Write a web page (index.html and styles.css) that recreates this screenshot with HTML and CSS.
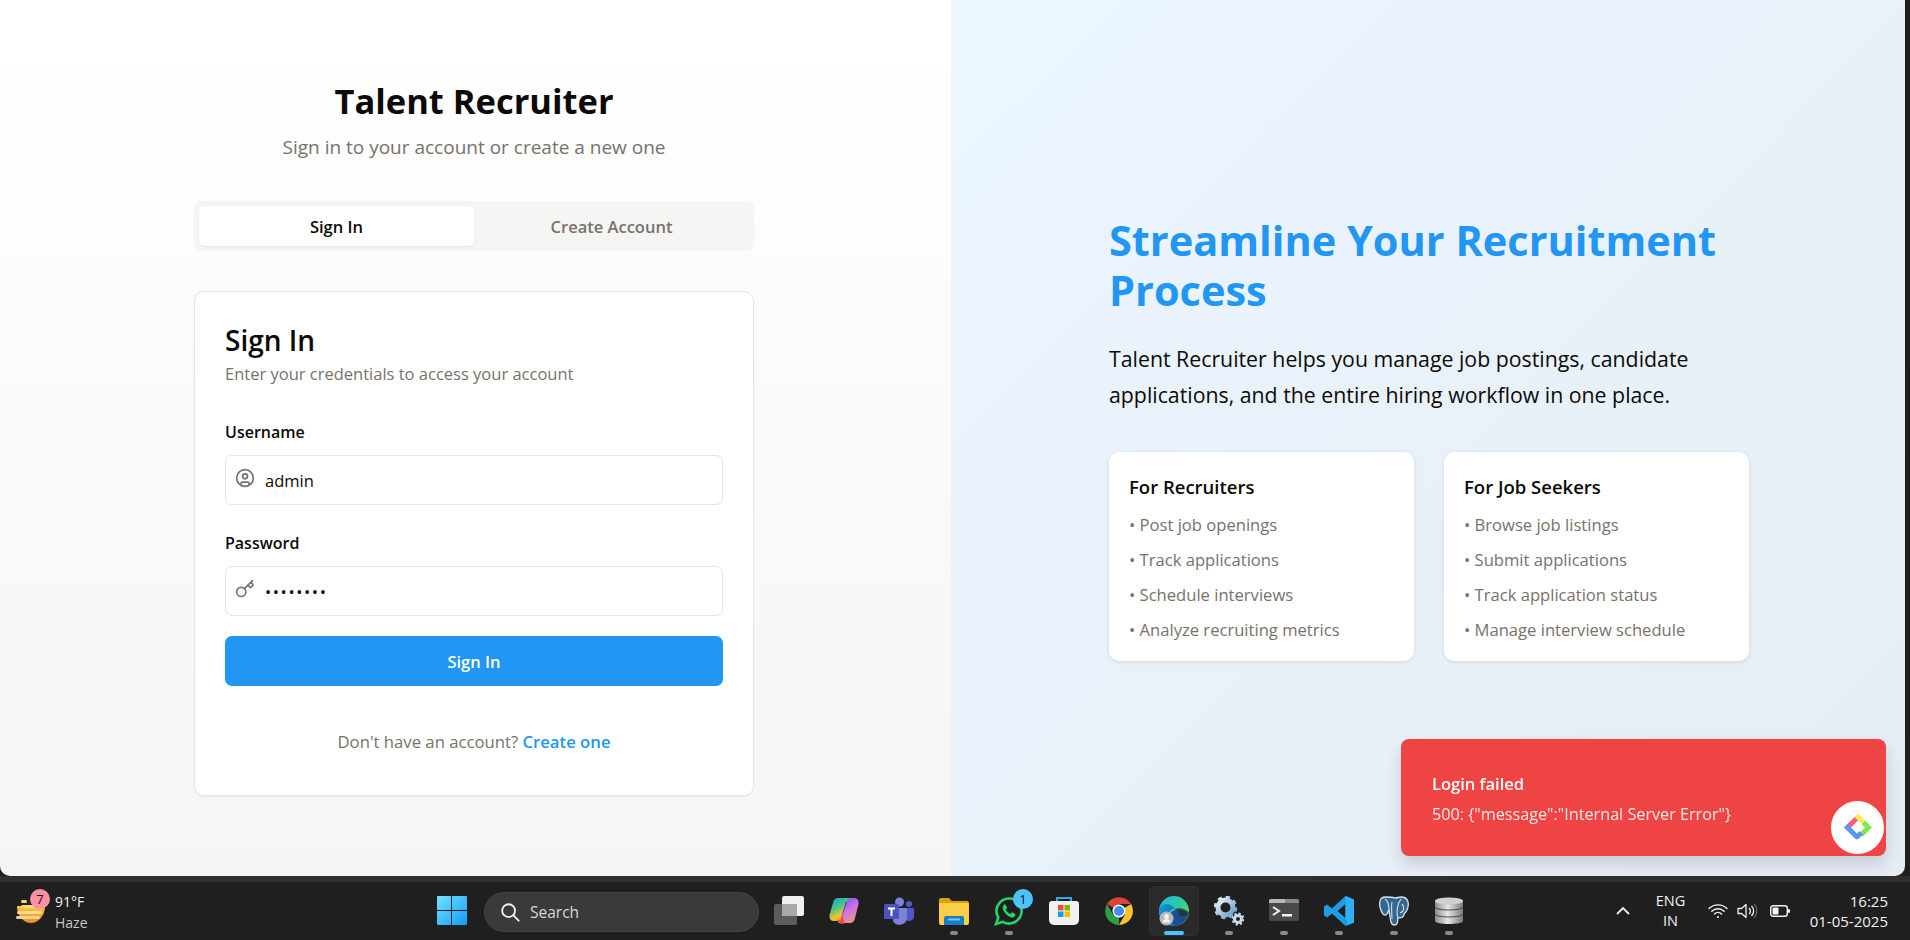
FILE: index.html
```html
<!DOCTYPE html>
<html lang="en">
<head>
    <meta charset="UTF-8">
    <meta name="viewport" content="width=device-width, initial-scale=1.0">
    <title>Talent Recruiter</title>
    <link rel="stylesheet" href="styles.css">
</head>
<body>

    <div class="window">
        <section class="auth-panel">
            <h1 class="brand">Talent Recruiter</h1>
            <p class="tagline">Sign in to your account or create a new one</p>

            <div class="tabs">
                <button class="tab active">Sign In</button>
                <button class="tab">Create Account</button>
            </div>

            <form class="card">
                <h2 class="card-title">Sign In</h2>
                <p class="card-desc">Enter your credentials to access your account</p>

                <label class="field-label">Username</label>
                <div class="field">
                    <svg class="field-icon" viewBox="0 0 24 24"><circle cx="12" cy="12" r="10"/><circle cx="12" cy="10" r="3"/><path d="M7 20.662V19a2 2 0 0 1 2-2h6a2 2 0 0 1 2 2v1.662"/></svg>
                    <input type="text" value="admin">
                </div>

                <label class="field-label second">Password</label>
                <div class="field">
                    <svg class="field-icon" viewBox="0 0 24 24"><path d="m15.5 7.5 2.3 2.3a1 1 0 0 0 1.4 0l2.1-2.1a1 1 0 0 0 0-1.4L19 4"/><path d="m21 2-9.6 9.6"/><circle cx="7.5" cy="15.5" r="5.5"/></svg>
                    <input class="secret" type="password" value="admin123">
                </div>

                <button type="button" class="submit">Sign In</button>

                <p class="switch">Don't have an account? <a href="#">Create one</a></p>
            </form>
        </section>

        <section class="hero">
            <h2 class="hero-title">Streamline Your Recruitment Process</h2>
            <p class="hero-text">Talent Recruiter helps you manage job postings, candidate applications, and the entire hiring workflow in one place.</p>
            <div class="hero-cards">
                <div class="hero-card">
                    <h3>For Recruiters</h3>
                    <ul>
                        <li>• Post job openings</li>
                        <li>• Track applications</li>
                        <li>• Schedule interviews</li>
                        <li>• Analyze recruiting metrics</li>
                    </ul>
                </div>
                <div class="hero-card">
                    <h3>For Job Seekers</h3>
                    <ul>
                        <li>• Browse job listings</li>
                        <li>• Submit applications</li>
                        <li>• Track application status</li>
                        <li>• Manage interview schedule</li>
                    </ul>
                </div>
            </div>
        </section>
    </div>

    <div class="toast">
        <div class="toast-title">Login failed</div>
        <div class="toast-msg">500: {"message":"Internal Server Error"}</div>
    </div>

    <div class="chat-bubble">
        <svg viewBox="0 0 32 32" width="32" height="32">
            <path d="M16 1.5 L23 8.5 L19.5 12 L12.5 5 Z" fill="#ffe85c"/>
            <path d="M23 8.5 L30 15.5 L21 24.5 L17.5 21 L23 15.5 L19.5 12 Z" fill="#7fe84f"/>
            <path d="M12.5 5 L2 15.5 L5.5 19 L16 8.5 Z" fill="#ff5c7c"/>
            <path d="M2 15.5 L12.5 26 Q15 28.5 17.5 26 L21 22.5 L17.5 19 L15 21.5 L5.5 12 Z" fill="#5b96f7"/>
        </svg>
    </div>

    <div class="taskbar-edge"></div>
    <footer class="taskbar">
        <div class="weather">
            <div class="weather-icon">
                <svg viewBox="0 0 30 33" width="30" height="33">
                    <defs><linearGradient id="sun" x1="0" y1="0" x2="0" y2="1"><stop offset="0" stop-color="#f7c648"/><stop offset="1" stop-color="#f08a12"/></linearGradient></defs>
                    <path d="M1 16 H29 A14 17 0 0 1 1 16 Z" fill="url(#sun)"/>
                    <path d="M18 12 H29 V16 H18 Z" fill="#f5bb38"/>
                    <rect x="5" y="10" width="6" height="3" rx="1.5" fill="#f8d778"/>
                    <rect x="5" y="15" width="13" height="3" rx="1.5" fill="#f8d778"/>
                    <rect x="1" y="21" width="25" height="3" rx="1.5" fill="#f8dc90"/>
                    <rect x="0" y="26" width="24" height="3" rx="1.5" fill="#ecd5a0"/>
                </svg>
                <span class="weather-badge">7</span>
            </div>
            <div class="weather-text">
                <div class="temp">91°F</div>
                <div class="cond">Haze</div>
            </div>
        </div>

        <div class="task">
            <svg class="task-icon" viewBox="0 0 30 30">
                <defs><linearGradient id="win" x1="0" y1="0" x2="1" y2="1"><stop offset="0" stop-color="#74e3ff"/><stop offset="1" stop-color="#0f9cf5"/></linearGradient></defs>
                <path d="M0 1 a1 1 0 0 1 1-1 H14 V14 H0 Z M15 0 H29 a1 1 0 0 1 1 1 V14 H15 Z M0 15 H14 V29 H1 a1 1 0 0 1-1-1 Z M15 15 H30 V28 a1 1 0 0 1-1 1 H15 Z" fill="url(#win)"/>
            </svg>
        </div>

        <div class="search">
            <svg viewBox="0 0 24 24" width="22" height="22" fill="none" stroke="#f2f2f2" stroke-width="2" stroke-linecap="round"><circle cx="10.5" cy="10.5" r="7"/><path d="m16 16 5.5 5.5"/></svg>
            <span>Search</span>
        </div>

        <div class="task">
            <svg class="task-icon" viewBox="0 0 30 30">
                <rect x="0" y="8" width="23" height="21" rx="2" fill="#5c5c5c"/>
                <rect x="8" y="0" width="22" height="20" rx="2" fill="#f0f0f0"/>
                <rect x="8" y="8" width="15" height="12" fill="#a8a8a8"/>
            </svg>
        </div>
        <div class="task">
            <svg class="task-icon" viewBox="0 0 30 30">
                <defs>
                    <linearGradient id="cp1" x1="0" y1="0" x2="0.5" y2="1"><stop offset="0" stop-color="#1c9de8"/><stop offset=".45" stop-color="#3fc78a"/><stop offset=".8" stop-color="#f4c52a"/><stop offset="1" stop-color="#f08a3c"/></linearGradient>
                    <linearGradient id="cp2" x1="0.2" y1="0" x2="0.8" y2="1"><stop offset="0" stop-color="#6a5cf0"/><stop offset=".5" stop-color="#d070e8"/><stop offset="1" stop-color="#f79a6c"/></linearGradient>
                </defs>
                <path d="M21 27 H9 L17 5 Q18 2 21 2 H25 Q30 2 29.500 8 L26 22 Q25 27 21 27 Z" fill="url(#cp2)"/>
                <path d="M9 2 H22 Q18 3 16 9 L12 22 Q11 25 8 25 H5 Q0 25 .500 19 L4 7 Q5 2 9 2 Z" fill="url(#cp1)"/>
                <path d="M17 6 L12 22 L13 20 L18 6 Z" fill="#4a2a70"/>
                <path d="M10 24 Q12 24 13 20 L16 27 Q13 29 11 27 Z" fill="#ee4f3a"/>
            </svg>
        </div>
        <div class="task">
            <svg class="task-icon" viewBox="0 0 30 30">
                <circle cx="15.500" cy="6" r="4.500" fill="#7b83d8"/>
                <circle cx="25" cy="8" r="3" fill="#5059c9"/>
                <path d="M20 12 H29 a1 1 0 0 1 1 1 V20 a5 5 0 0 1-9 3 Z" fill="#5059c9"/>
                <path d="M9 12 H22 a1 1 0 0 1 1 1 V22 a7.500 7.500 0 0 1-14 3 Z" fill="#7b83d8"/>
                <rect x="0" y="8" width="15" height="15" rx="1.500" fill="#4b53bc"/>
                <path d="M4 11.500 H11 V13.500 H8.500 V20 H6.500 V13.500 H4 Z" fill="#fff"/>
            </svg>
        </div>
        <div class="task running">
            <svg class="task-icon" viewBox="0 0 30 30">
                <path d="M0 4 a2 2 0 0 1 2-2 H10 L13 5 H28 a2 2 0 0 1 2 2 V12 H0 Z" fill="#d9a10c"/>
                <path d="M0 7 H28 a2 2 0 0 1 2 2 V27 a2 2 0 0 1-2 2 H2 a2 2 0 0 1-2-2 Z" fill="#fbcf45"/>
                <path d="M5 29 V22 a2 2 0 0 1 2-2 H23 a2 2 0 0 1 2 2 V29 Z" fill="#1a7fc9"/>
                <rect x="9" y="22.500" width="12" height="2" rx="1" fill="#7cc7ef"/>
            </svg>
            <span class="pip"></span>
        </div>
        <div class="task running">
            <svg class="task-icon" viewBox="0 0 30 30">
                <path d="M15 2.500 a12.500 12.500 0 1 1-6.200 23.300 L2 28 l2.300-6.600 A12.500 12.500 0 0 1 15 2.500 Z" fill="none" stroke="#25d366" stroke-width="2.600"/>
                <path d="M10.500 8.500 c-1.200.5-2 2-1.800 3.600.4 3.800 5 8.800 9 9.300 1.700.2 3.200-.8 3.600-2l.1-1.400-3.300-1.700-1.600 1.800c-2-.7-3.900-2.600-4.700-4.600l1.400-1.500-1.500-3.400Z" fill="#25d366"/>
            </svg>
            <span class="task-badge">1</span>
            <span class="pip"></span>
        </div>
        <div class="task">
            <svg class="task-icon" viewBox="0 0 30 30">
                <path d="M8 7 V2 H22 V7" fill="none" stroke="#2ea8e6" stroke-width="2"/>
                <path d="M0 8 a3 3 0 0 1 3-3 H27 a3 3 0 0 1 3 3 V24 a5 5 0 0 1-5 5 H5 a5 5 0 0 1-5-5 Z" fill="#f1f1f1"/>
                <rect x="9" y="9" width="5.500" height="5.500" fill="#f25022"/>
                <rect x="15.500" y="9" width="5.500" height="5.500" fill="#7fba00"/>
                <rect x="9" y="15.500" width="5.500" height="5.500" fill="#00a4ef"/>
                <rect x="15.500" y="15.500" width="5.500" height="5.500" fill="#ffb900"/>
            </svg>
        </div>
        <div class="task">
            <svg class="task-icon" viewBox="0 0 30 30">
                <path d="M15 15 L3 8 A14 14 0 0 1 27.100 8 H15 Z" fill="#db4437"/>
                <path d="M15 15 L27.100 8 A14 14 0 0 1 15 29 L21 18.500 Z" fill="#fbc02d"/>
                <path d="M15 15 L15 29 A14 14 0 0 1 3 8 L9 18.500 Z" fill="#2e9f48"/>
                <circle cx="15" cy="15" r="6.500" fill="#fff"/>
                <circle cx="15" cy="15" r="5" fill="#3f8ef0"/>
            </svg>
        </div>
        <div class="task running active-task">
            <svg class="task-icon" viewBox="0 0 30 30">
                <defs>
                    <linearGradient id="edgeA" x1="0" y1="0" x2="1" y2="0.800"><stop offset="0" stop-color="#1fb6e8"/><stop offset=".6" stop-color="#2fcf9a"/><stop offset="1" stop-color="#5fd84f"/></linearGradient>
                    <linearGradient id="edgeB" x1="0" y1="0" x2="1" y2="1"><stop offset="0" stop-color="#1a9ae0"/><stop offset="1" stop-color="#0c59a4"/></linearGradient>
                </defs>
                <circle cx="15" cy="15" r="15" fill="url(#edgeA)"/>
                <path d="M14 15 C20 12 27 15 29.500 18 C28 24 22 30 15 30 C9 29 8 18 14 15 Z" fill="#184f96"/>
                <path d="M15 13 C20 11 28 13 30 17 C27 21 23 21 20 20 C21 17 19 14 15 13 Z" fill="#2a2a2a" opacity=".75"/>
                <path d="M.500 12 C4 6 13 7 15.500 13 C9 13 8 21 12 26 C14 28.500 17 29.500 20 29 C18 30 16 30 15 30 C6 30 -1 21 .500 12 Z" fill="url(#edgeB)"/>
                <circle cx="7.500" cy="22.500" r="7" fill="#b8b8b8"/>
                <circle cx="7.500" cy="20.500" r="2.500" fill="#f2f2f2"/>
                <path d="M3.500 26.500 a4 3.500 0 0 1 8 0 Z" fill="#f2f2f2"/>
            </svg>
            <span class="pip"></span>
        </div>
        <div class="task running">
            <svg class="task-icon" viewBox="0 0 30 30">
                <defs><linearGradient id="gear" x1="0" y1="0" x2="1" y2="1"><stop offset="0" stop-color="#e8f2fb"/><stop offset="1" stop-color="#6d9cc8"/></linearGradient></defs>
                <circle cx="11.500" cy="11.500" r="7.500" fill="none" stroke="url(#gear)" stroke-width="5"/>
                <circle cx="11.500" cy="11.500" r="10" fill="none" stroke="url(#gear)" stroke-width="3.500" stroke-dasharray="4 3.850"/>
                <circle cx="24" cy="23" r="3.500" fill="none" stroke="#c9dbea" stroke-width="3"/>
                <circle cx="24" cy="23" r="5.500" fill="none" stroke="#c9dbea" stroke-width="2" stroke-dasharray="2.200 2.100"/>
            </svg>
            <span class="pip"></span>
        </div>
        <div class="task running">
            <svg class="task-icon" viewBox="0 0 30 30">
                <rect x="0" y="3" width="30" height="22" rx="2" fill="#4a4a4a"/>
                <path d="M0 5 a2 2 0 0 1 2-2 H16 V7 H0 Z" fill="#b8b8b8"/>
                <path d="M16 3 H28 a2 2 0 0 1 2 2 V7 H16 Z" fill="#8a8a8a"/>
                <path d="M4 11 L10 15 L4 19" fill="none" stroke="#f2f2f2" stroke-width="2"/>
                <rect x="13" y="18" width="10" height="2.500" fill="#f2f2f2"/>
            </svg>
            <span class="pip"></span>
        </div>
        <div class="task running">
            <svg class="task-icon" viewBox="0 0 30 30">
                <path d="M21.500 0 L30 3.500 V26.500 L21.500 30 L8 17.500 L3 21.500 L0 19.500 V10.500 L3 8.500 L8 12.500 Z M21.500 8 L13.500 15 L21.500 22 Z" fill="#1e9de6" fill-rule="evenodd"/>
                <path d="M21.500 0 L30 3.500 V26.500 L21.500 30 Z" fill="#2fb0f5"/>
                <path d="M21.500 8 L21.500 22 L23 30 L21.500 30 Z" fill="#1277bb"/>
            </svg>
            <span class="pip"></span>
        </div>
        <div class="task running">
            <svg class="task-icon" viewBox="0 0 30 30">
                <path d="M6 1 C1 1 0 6 1 11 C2 15 4 20 7 19 C9 18 9 15 10 14 C11 19 11 23 12 26 C13 30 18 30 18.500 26 L19 22 C23 22 25 21 25 18 C28 16 30 10 29 6 C28 2 25 1 22 1 C20 1 18 2 16 2 C13 1 9 1 6 1 Z" fill="#336791" stroke="#d7e3ee" stroke-width="1.300"/>
                <path d="M10 14 C10 9 9 5 6 3 M19 22 C17 17 18 8 22 3 M23 8 C26 11 25 16 21 17 M13 6 C12 11 13 17 13 23" fill="none" stroke="#d7e3ee" stroke-width="1.100"/>
            </svg>
            <span class="pip"></span>
        </div>
        <div class="task running">
            <svg class="task-icon" viewBox="0 0 30 30">
                <defs><linearGradient id="dbg" x1="0" y1="0" x2="1" y2="0"><stop offset="0" stop-color="#8c8c8c"/><stop offset=".45" stop-color="#e6e6e6"/><stop offset="1" stop-color="#7c7c7c"/></linearGradient></defs>
                <path d="M1 5 C1 1 29 1 29 5 V25 C29 29 1 29 1 25 Z" fill="url(#dbg)"/>
                <ellipse cx="15" cy="5" rx="14" ry="3.500" fill="#d0d0d0"/>
                <path d="M1 11 C3 15 27 15 29 11 M1 18 C3 22 27 22 29 18" fill="none" stroke="#4d4d4d" stroke-width="1.200"/>
            </svg>
            <span class="pip"></span>
        </div>

        <div class="tray">
            <svg class="chevron" viewBox="0 0 16 10" width="16" height="10" fill="none" stroke="#f2f2f2" stroke-width="1.800"><path d="m2 8 6-6 6 6"/></svg>
            <div class="lang">ENG<br>IN</div>
            <svg class="tray-wifi" viewBox="0 0 20 16" width="20" height="16" fill="none" stroke="#f2f2f2" stroke-width="1.400" stroke-linecap="round"><path d="M1 5.500a13 13 0 0 1 18 0M3.800 8.300a9 9 0 0 1 12.400 0M6.500 11a5 5 0 0 1 7 0"/><circle cx="10" cy="14" r="1" fill="#f2f2f2" stroke="none"/></svg>
            <svg class="tray-sound" viewBox="0 0 22 16" width="22" height="16" fill="none" stroke="#f2f2f2" stroke-width="1.300"><path d="M1 5.500h3.500L9 1.500v13l-4.500-4H1Z" stroke-linejoin="round"/><path d="M12 5a4 4 0 0 1 0 6M14.500 3a7 7 0 0 1 0 10"/><path d="M17 1a10 10 0 0 1 0 14" stroke="#666"/></svg>
            <svg class="tray-battery" viewBox="0 0 20 12" width="20" height="12"><rect x=".700" y=".700" width="16.600" height="10.600" rx="2.500" fill="none" stroke="#f2f2f2" stroke-width="1.400"/><rect x="2.500" y="2.500" width="6" height="7" rx="1" fill="#f2f2f2"/><rect x="18" y="4" width="2" height="4" rx="1" fill="#f2f2f2"/></svg>
            <div class="clock">16:25<br>01-05-2025</div>
        </div>
    </footer>

</body>
</html>
```

FILE: styles.css
```css
* {
    box-sizing: border-box;
}
html, body {
    height: 100%;
}
body {
    margin: 0;
    display: flex;
    flex-direction: column;
    height: 940px;
    overflow: hidden;
    background-color: #1f1f1f;
    font-family: "Open Sans", "Noto Sans", sans-serif;
    color: #0c0a09;
}

.window {
    display: flex;
    width: 1905px;
    height: 876px;
    flex-shrink: 0;
    overflow: hidden;
    border-radius: 0 0 10px 10px;
}

/* left panel */
.auth-panel {
    width: 951px;
    padding-top: 78px;
    padding-right: 3px;
    display: flex;
    flex-direction: column;
    align-items: center;
    background: linear-gradient(to bottom, #ffffff, #f5f5f4);
}
.brand {
    margin: 0;
    font-size: 34.5px;
    line-height: 45px;
    font-weight: 700;
}
.tagline {
    margin: 10px 0 0;
    font-size: 19px;
    line-height: 28px;
    color: #78716c;
}
.tabs {
    width: 560px;
    height: 50px;
    margin-top: 40px;
    padding: 5px;
    display: flex;
    background-color: #f5f5f4;
    border-radius: 7px;
}
.tab {
    flex: 1;
    border: none;
    background: none;
    border-radius: 5px;
    font-family: inherit;
    font-size: 16.5px;
    font-weight: 600;
    color: #78716c;
}
.tab.active {
    background-color: #fff;
    color: #0c0a09;
    box-shadow: 0 1px 2px rgba(0, 0, 0, 0.08);
}
.card {
    width: 560px;
    height: 505px;
    margin-top: 40px;
    padding: 29px 30px 0;
    background-color: #fff;
    border: 1px solid #e7e5e4;
    border-radius: 10px;
    box-shadow: 0 1px 2px rgba(0, 0, 0, 0.05);
}
.card-title {
    margin: 0;
    font-size: 28px;
    line-height: 38px;
    font-weight: 600;
}
.card-desc {
    margin: 3px 0 0;
    font-size: 16.5px;
    line-height: 24px;
    color: #78716c;
}
.field-label {
    display: block;
    margin-top: 34px;
    font-size: 16px;
    line-height: 24px;
    font-weight: 600;
}
.field-label.second {
    margin-top: 26px;
}
.field {
    height: 50px;
    margin-top: 11px;
    padding-left: 9px;
    display: flex;
    align-items: center;
    background-color: #fff;
    border: 1px solid #e7e5e4;
    border-radius: 7px;
}
.field-icon {
    width: 20px;
    height: 20px;
    margin-top: -5px;
    flex-shrink: 0;
    fill: none;
    stroke: #78716c;
    stroke-width: 2;
    stroke-linecap: round;
    stroke-linejoin: round;
}
.field input {
    flex: 1;
    min-width: 0;
    margin-left: 10px;
    padding-left: 0;
    border: none;
    outline: none;
    background: none;
    font-family: inherit;
    font-size: 16.5px;
    color: #0c0a09;
}
.field input.secret {
    letter-spacing: 1.6px;
}
.submit {
    display: block;
    width: 100%;
    height: 50px;
    margin-top: 20px;
    border: none;
    border-radius: 7px;
    background-color: #2196f3;
    color: #fff;
    font-family: inherit;
    font-size: 16.5px;
    font-weight: 600;
}
.switch {
    margin: 44px 0 0;
    text-align: center;
    font-size: 16.7px;
    line-height: 24px;
    color: #78716c;
}
.switch a {
    color: #2196f3;
    font-weight: 600;
    text-decoration: none;
}

/* right panel */
.hero {
    flex: 1;
    padding-left: 158px;
    padding-right: 150px;
    display: flex;
    flex-direction: column;
    justify-content: center;
    background: linear-gradient(135deg, #ecf6fe, #e5ecf4);
}
.hero-title {
    margin: 0;
    font-size: 41.5px;
    line-height: 50px;
    font-weight: 700;
    color: #2196f3;
}
.hero-text {
    margin: 26px 0 0;
    font-size: 21.3px;
    line-height: 36px;
}
.hero-cards {
    margin-top: 39px;
    display: flex;
    gap: 30px;
}
.hero-card {
    width: 305px;
    padding: 20px 20px 14px;
    background-color: #fff;
    border-radius: 10px;
    box-shadow: 0 1px 4px rgba(0, 0, 0, 0.1);
}
.hero-card h3 {
    margin: 0;
    font-size: 18.5px;
    line-height: 30px;
    font-weight: 600;
}
.hero-card ul {
    margin: 5px 0 0;
    padding: 0;
    list-style: none;
}
.hero-card li {
    font-size: 16.6px;
    line-height: 35px;
    color: #78716c;
}

/* toast + chat bubble lie over the page */
.toast {
    position: fixed;
    left: 1401px;
    top: 739px;
    width: 485px;
    height: 117px;
    padding: 33px 31px;
    background-color: #ef4444;
    color: #fff;
    border-radius: 8px;
    box-shadow: 0 8px 16px rgba(0, 0, 0, 0.14);
}
.toast-title {
    font-size: 16.5px;
    line-height: 24px;
    font-weight: 600;
}
.toast-msg {
    margin-top: 6px;
    font-size: 16.2px;
    line-height: 24px;
    color: #fde8e8;
}
.chat-bubble {
    position: fixed;
    left: 1831px;
    top: 801px;
    width: 53px;
    height: 53px;
    display: flex;
    align-items: center;
    justify-content: center;
    background-color: #fff;
    border-radius: 50%;
}

/* windows taskbar */
.taskbar-edge {
    height: 6px;
    flex-shrink: 0;
    background-color: #2f2f2f;
}
.taskbar {
    flex: 1;
    display: flex;
    align-items: flex-start;
    color: #f2f2f2;
}
.weather {
    width: 424.5px;
    padding-left: 16px;
    display: flex;
}
.weather-icon {
    position: relative;
    width: 30px;
    height: 33px;
    margin-top: 8px;
}
.weather-badge {
    position: absolute;
    left: 14px;
    top: -1px;
    width: 20px;
    height: 20px;
    border-radius: 50%;
    background-color: #ff8fa3;
    color: #111;
    font-size: 13px;
    line-height: 20px;
    text-align: center;
}
.weather-text {
    margin: 9px 0 0 9px;
    font-size: 14px;
    line-height: 21px;
}
.weather-text .cond {
    color: #c8c8c8;
}
.task {
    position: relative;
    width: 50px;
    height: 50px;
    margin: 4px 2.5px 0;
    padding-top: 10px;
    display: flex;
    flex-direction: column;
    align-items: center;
    flex-shrink: 0;
}
.task-icon {
    width: 30px;
    height: 30px;
    flex-shrink: 0;
}
.pip {
    width: 8px;
    height: 4px;
    margin-top: 5px;
    border-radius: 2px;
    background-color: #8a8a8a;
}
.active-task {
    background-color: #2a2a2a;
    border: 1px solid #303030;
    border-radius: 5px;
    padding-top: 9px;
}
.active-task .pip {
    width: 20px;
    background-color: #4cc2ff;
}
.task-badge {
    position: absolute;
    left: 29px;
    top: 3px;
    width: 20px;
    height: 20px;
    border-radius: 50%;
    background-color: #4cc2ff;
    color: #111;
    font-size: 13px;
    line-height: 20px;
    text-align: center;
}
.search {
    width: 275px;
    height: 40px;
    margin: 10px 2.5px 0 4.5px;
    padding-left: 14px;
    display: flex;
    align-items: center;
    gap: 9px;
    background-color: #3a3a3a;
    border: 1px solid #454545;
    border-radius: 20px;
    font-size: 15.5px;
    color: #d8d8d8;
}
.tray {
    flex: 1;
    display: flex;
    align-items: center;
    padding-right: 22px;
    height: 58px;
}
.chevron {
    margin-left: 138px;
}
.lang {
    width: 52px;
    margin-left: 14px;
    text-align: center;
    font-size: 14.5px;
    line-height: 20px;
}
.tray-wifi {
    margin-left: 11px;
}
.tray-sound {
    margin-left: 9px;
}
.tray-battery {
    margin-left: 11px;
}
.clock {
    flex: 1;
    text-align: right;
    font-size: 15px;
    line-height: 20px;
}
```
